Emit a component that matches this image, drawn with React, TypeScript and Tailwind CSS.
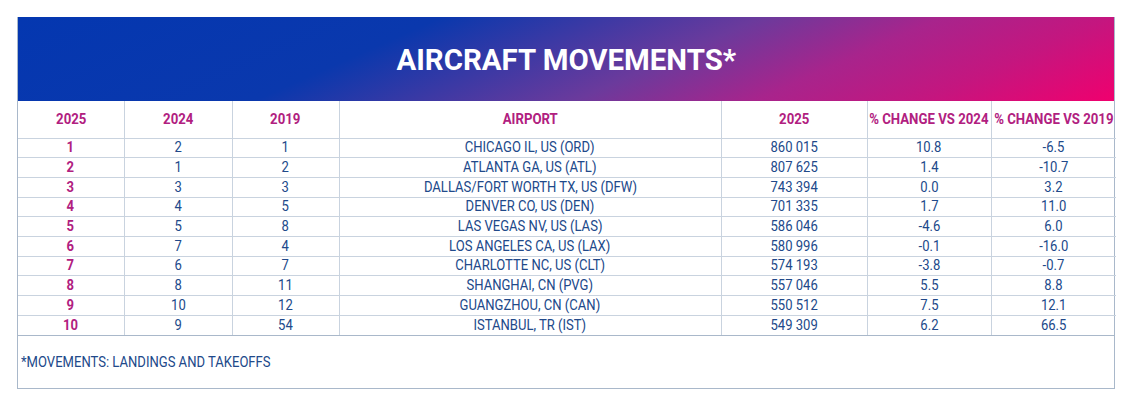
const rows = [
  ['1', '2', '1', 'CHICAGO IL, US (ORD)', '860 015', '10.8', '-6.5'],
  ['2', '1', '2', 'ATLANTA GA, US (ATL)', '807 625', '1.4', '-10.7'],
  ['3', '3', '3', 'DALLAS/FORT WORTH TX, US (DFW)', '743 394', '0.0', '3.2'],
  ['4', '4', '5', 'DENVER CO, US (DEN)', '701 335', '1.7', '11.0'],
  ['5', '5', '8', 'LAS VEGAS NV, US (LAS)', '586 046', '-4.6', '6.0'],
  ['6', '7', '4', 'LOS ANGELES CA, US (LAX)', '580 996', '-0.1', '-16.0'],
  ['7', '6', '7', 'CHARLOTTE NC, US (CLT)', '574 193', '-3.8', '-0.7'],
  ['8', '8', '11', 'SHANGHAI, CN (PVG)', '557 046', '5.5', '8.8'],
  ['9', '10', '12', 'GUANGZHOU, CN (CAN)', '550 512', '7.5', '12.1'],
  ['10', '9', '54', 'ISTANBUL, TR (IST)', '549 309', '6.2', '66.5'],
]

const headers = ['2025', '2024', '2019', 'AIRPORT', '2025', '% CHANGE VS 2024', '% CHANGE VS 2019']
const widths = ['w-[106px]', 'w-[108px]', 'w-[107px]', 'w-[382px]', 'w-[146px]', 'w-[124px]', 'w-[125px]']

export default function App() {
  return (
    <div className="w-[1147px] h-[405px] bg-white pt-[17px] pl-[17px] font-['Roboto',sans-serif]">
      <div className="w-[1098px] border border-[#a9b8ca] border-t-0">
        <div className="h-[84px] flex items-center justify-center bg-[linear-gradient(156deg,#0437b0_0%,#0a38ad_33%,#6b3a9c_58%,#a8248c_72%,#c4167f_85%,#f0006e_100%)]">
          <h1 className="text-white font-bold text-[30px] leading-none pt-[2px] whitespace-nowrap inline-block scale-x-[0.98]">
            AIRCRAFT MOVEMENTS*
          </h1>
        </div>
        <table className="border-collapse table-fixed w-full">
          <thead>
            <tr className="h-[37px]">
              {headers.map((h, i) => (
                <th
                  key={i}
                  className={`${widths[i]} p-0 border-l border-[#c9d3df] first:border-l-0 text-[#b1207f] font-bold text-[15px]`}
                >
                  <div className="flex justify-center whitespace-nowrap">
                    <span className="shrink-0 scale-x-[0.88]">{h}</span>
                  </div>
                </th>
              ))}
            </tr>
          </thead>
          <tbody>
            {rows.map((r) => (
              <tr key={r[0]} className="h-[19.7px] border-t border-[#c9d3df]">
                {r.map((c, i) => (
                  <td
                    key={i}
                    className={`p-0 border-l border-[#c9d3df] first:border-l-0 text-center text-[15px] leading-none whitespace-nowrap ${
                      i === 0 ? 'text-[#b1207f] font-bold' : 'text-[#21498a]'
                    }`}
                  >
                    <span className="inline-block scale-x-[0.87]">{c}</span>
                  </td>
                ))}
              </tr>
            ))}
          </tbody>
        </table>
        <div className="h-[53px] border-t border-[#a9b8ca] flex items-center px-[3px] text-[15px] text-[#21498a]">
          <span className="inline-block origin-left scale-x-[0.87] whitespace-nowrap">*MOVEMENTS: LANDINGS AND TAKEOFFS</span>
        </div>
      </div>
    </div>
  )
}
